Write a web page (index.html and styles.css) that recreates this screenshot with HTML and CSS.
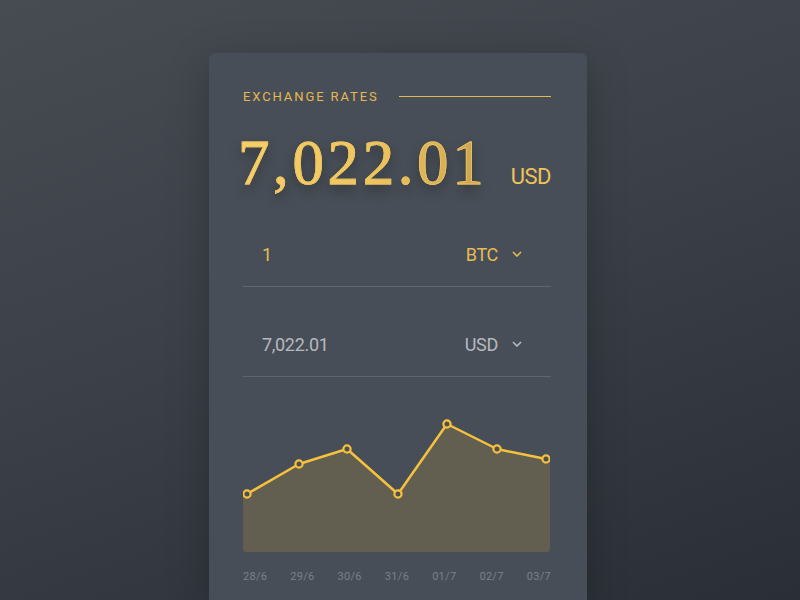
FILE: index.html
```html
<!DOCTYPE html>
<html lang="en">
<head>
    <meta charset="UTF-8">
    <meta name="viewport" content="width=device-width, initial-scale=1.0">
    <title>Exchange Rates</title>
    <link rel="stylesheet" href="styles.css">
</head>
<body>
    <div class="card">
        <div class="title">
            <span>EXCHANGE RATES</span>
            <div class="title-line"></div>
        </div>

        <div class="rate">
            <span class="rate-value">7,022.01</span>
            <span class="rate-unit">USD</span>
        </div>

        <div class="row active">
            <span class="amount">1</span>
            <span class="currency">BTC
                <svg class="chevron" width="10" height="6" viewBox="0 0 10 6"><path d="M1 1l4 4 4-4" fill="none" stroke="currentColor" stroke-width="1.6"/></svg>
            </span>
        </div>
        <div class="row">
            <span class="amount">7,022.01</span>
            <span class="currency">USD
                <svg class="chevron" width="10" height="6" viewBox="0 0 10 6"><path d="M1 1l4 4 4-4" fill="none" stroke="currentColor" stroke-width="1.6"/></svg>
            </span>
        </div>

        <svg class="chart" width="307" height="168" viewBox="0 0 307 168">
            <defs>
                <clipPath id="chartClip">
                    <rect x="0" y="0" width="307" height="168" rx="3"/>
                </clipPath>
            </defs>
            <polygon clip-path="url(#chartClip)" fill="#625f51"
                points="0,110 4,110 56,80 104,65 155,110 204,40 254,65 303,75 307,75 307,168 0,168"/>
            <polyline fill="none" stroke="#f6c23d" stroke-width="2.5" stroke-linejoin="round"
                points="4,110 56,80 104,65 155,110 204,40 254,65 303,75"/>
            <g fill="#4d4f50" stroke="#f6c23d" stroke-width="2.2">
                <circle cx="4" cy="110" r="3.6"/>
                <circle cx="56" cy="80" r="3.6"/>
                <circle cx="104" cy="65" r="3.6"/>
                <circle cx="155" cy="110" r="3.6"/>
                <circle cx="204" cy="40" r="3.6"/>
                <circle cx="254" cy="65" r="3.6"/>
                <circle cx="303" cy="75" r="3.6"/>
            </g>
        </svg>

        <div class="dates">
            <span>28/6</span>
            <span>29/6</span>
            <span>30/6</span>
            <span>31/6</span>
            <span>01/7</span>
            <span>02/7</span>
            <span>03/7</span>
        </div>
    </div>
</body>
</html>
```

FILE: styles.css
```css
html, body {
    height: 100%;
}
body {
    margin: 0;
    overflow: hidden;
    background: linear-gradient(160deg, #474c53 0%, #3c4149 45%, #2a2e36 100%);
    font-family: Roboto, sans-serif;
}
.card {
    width: 378px;
    height: 547px;
    box-sizing: border-box;
    margin: 53px 0 0 209px;
    padding: 35px 36px 0 34px;
    background-color: #484e57;
    border-radius: 6px 6px 0 0;
    box-shadow: 0 10px 40px rgba(0, 0, 0, 0.25);
}
.title {
    display: flex;
    align-items: center;
    height: 16px;
    color: #e6b94f;
    font-size: 13px;
    letter-spacing: 1.9px;
}
.title-line {
    flex: 1;
    height: 1px;
    margin-left: 20px;
    background-color: #e6b94f;
}
.rate {
    display: flex;
    justify-content: space-between;
    align-items: baseline;
    height: 80px;
    margin-top: 23px;
}
.rate-value {
    font-family: "Liberation Serif", serif;
    font-size: 63px;
    letter-spacing: 3.6px;
    margin-left: -5px;
    -webkit-text-stroke: 0.8px #eec45e;
    background: linear-gradient(90deg, #f8d06a 0%, #eec45e 55%, #c7a253 100%);
    -webkit-background-clip: text;
    background-clip: text;
    color: transparent;
    filter: drop-shadow(0 6px 6px rgba(0, 0, 0, 0.3));
}
.rate-unit {
    color: #eec35a;
    font-size: 22px;
    letter-spacing: -0.5px;
}
.row {
    display: flex;
    justify-content: space-between;
    align-items: center;
    height: 64px;
    margin-top: 25px;
    padding: 0 29px 0 19px;
    border-bottom: 1px solid #5e656e;
    color: #b5b9bf;
    font-size: 18px;
    letter-spacing: -0.3px;
}
.row.active {
    margin-top: 15px;
    color: #e6bb55;
}
.currency {
    display: flex;
    align-items: center;
}
.chevron {
    margin-left: 14px;
}
.chart {
    display: block;
    margin-top: 7px;
}
.dates {
    display: flex;
    justify-content: space-between;
    margin-top: 18px;
    color: #7a8089;
    font-size: 11px;
    letter-spacing: 0.3px;
}
```
